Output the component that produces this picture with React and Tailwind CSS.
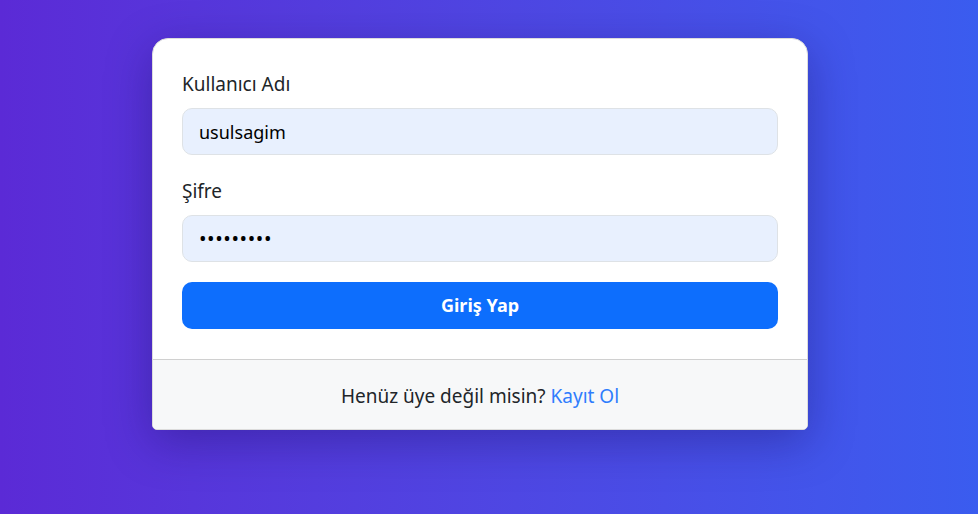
export default function App() {
  return (
    <div
      className="min-h-screen w-full bg-linear-to-r from-[#5b2ad6] to-[#3a5cef] pt-[38px]"
      style={{ fontFamily: '"Noto Sans", "Open Sans", sans-serif' }}
    >
      <div className="ml-[152px] w-[656px] overflow-hidden rounded-t-[16px] rounded-b-[5px] border border-[#dcdcdc] bg-white shadow-[0_12px_45px_rgba(20,10,90,0.35)]">
        <form className="px-[29px] pt-[29px] pb-[30px]" onSubmit={(e) => e.preventDefault()}>
          <div className="mb-[20px]">
            <label className="mb-[10px] block pt-[3px] text-[19px] leading-[27px] text-[#212529]">Kullanıcı Adı</label>
            <input
              type="text"
              defaultValue="usulsagim"
              className="block h-[47px] w-full rounded-[10px] border border-[#dee2e6] bg-[#e8f0fe] px-[16px] text-[18px] text-black outline-none"
            />
          </div>
          <div className="mb-[20px]">
            <label className="mb-[10px] block pt-[3px] text-[19px] leading-[27px] text-[#212529]">Şifre</label>
            <input
              type="password"
              defaultValue="123456789"
              className="block h-[47px] w-full rounded-[10px] border border-[#dee2e6] bg-[#e8f0fe] px-[16px] text-[20px] tracking-[0.6px] text-black outline-none"
            />
          </div>
          <button
            type="submit"
            className="block h-[47px] w-full rounded-[10px] bg-[#0d6efd] text-[18px] font-bold text-white"
          >
            Giriş Yap
          </button>
        </form>
        <div className="flex h-[70px] items-center justify-center border-t border-[#d0d0d0] bg-[#f7f8f9] pt-[4px] text-[19px] text-[#212529]">
          <span>
            Henüz üye değil misin? <a href="#" className="text-[#2f7dfd]">Kayıt Ol</a>
          </span>
        </div>
      </div>
    </div>
  );
}
